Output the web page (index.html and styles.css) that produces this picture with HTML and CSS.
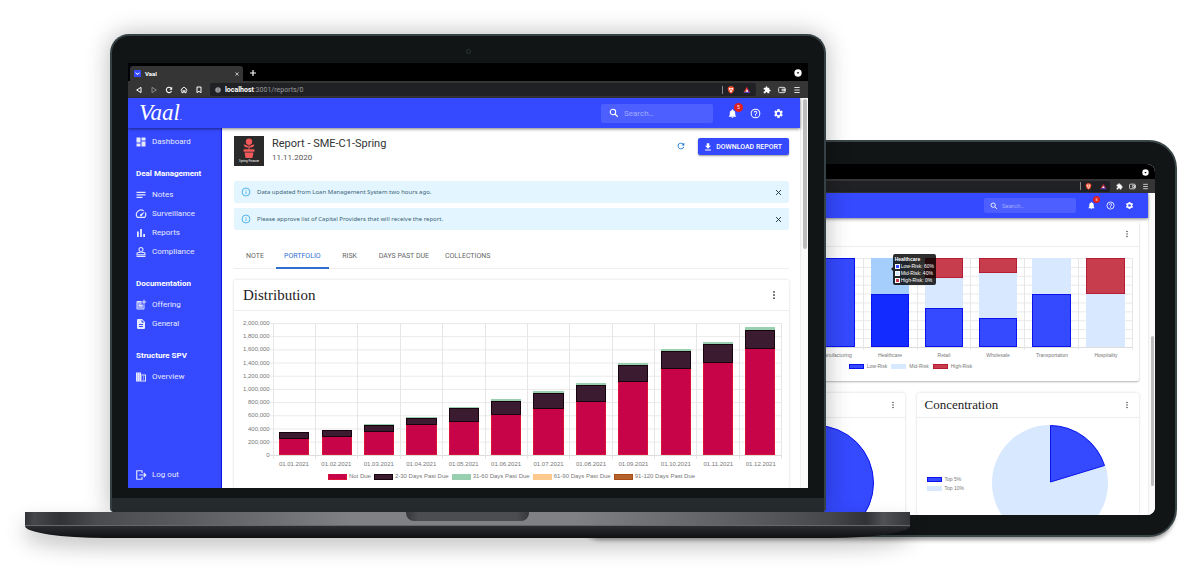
FILE: index.html
```html
<!DOCTYPE html>
<html lang="en">
<head>
<meta charset="utf-8">
<title>Vaal</title>
<link rel="stylesheet" href="styles.css">
</head>
<body>
<svg class="sprite" aria-hidden="true">
  <symbol id="dashboard" viewBox="0 0 24 24"><path d="M3 13h8V3H3zm0 8h8v-6H3zm10 0h8V11h-8zm0-18v6h8V3z"/></symbol>
  <symbol id="notes" viewBox="0 0 24 24"><path d="M3 18h12v-2.4H3zM3 5.600v2.400h18V5.600zm0 7.400h18v-2.400H3z"/></symbol>
  <symbol id="speed" viewBox="0 0 24 24"><path d="M17.500 5.700A9.300 9.300 0 0 0 4.600 18.700h14.800A9.300 9.300 0 0 0 20.700 9" fill="none" stroke="currentColor" stroke-width="2.300"/><path d="M10.400 16a2 2 0 0 0 3 0L19.500 7 10.400 13.200a2 2 0 0 0 0 2.800z"/></symbol>
  <symbol id="bars" viewBox="0 0 24 24"><path d="M4 9h3.600v11H4zM10.200 4h3.600v16h-3.600zM16.400 14H20v6h-3.600z"/></symbol>
  <symbol id="stamp" viewBox="0 0 24 24"><path d="M3 19.500h18V22H3z"/><path d="M12 3a4 4 0 0 0-2 7.500c.8.6.8 1.500.3 2.500H6a2 2 0 0 0-2 2v2.500h16V15a2 2 0 0 0-2-2h-4.300c-.5-1-.5-1.900.3-2.500A4 4 0 0 0 12 3z" fill="none" stroke="currentColor" stroke-width="2.200"/></symbol>
  <symbol id="postadd" viewBox="0 0 24 24"><path d="M17 19H5V7h8V4H5a2 2 0 0 0-2 2v13a2 2 0 0 0 2 2h12a2 2 0 0 0 2-2v-8h-2z"/><path d="M19 1.500h-2V5h-3.500v2H17v3.500h2V7h3.500V5H19zM7 9h6v2H7zm0 3h8.500v2H7zm0 3h8.500v2H7z"/><path d="M4 6h9v3h3v10H4z" opacity=".35"/></symbol>
  <symbol id="doc" viewBox="0 0 24 24"><path d="M14 2H6a2 2 0 0 0-2 2v16a2 2 0 0 0 2 2h12a2 2 0 0 0 2-2V8zm2 16H8v-2h8zm0-4H8v-2h8zm-3-5V3.500L18.500 9z"/></symbol>
  <symbol id="business" viewBox="0 0 24 24"><path d="M12 7V3H2v18h20V7zM6 19H4v-2h2zm0-4H4v-2h2zm0-4H4V9h2zm0-4H4V5h2zm4 12H8v-2h2zm0-4H8v-2h2zm0-4H8V9h2zm0-4H8V5h2zm10 12h-8v-2h2v-2h-2v-2h2v-2h-2V9h8zm-2-8h-2v2h2zm0 4h-2v2h2z"/><path d="M3 4h8v16H3z" opacity=".5"/></symbol>
  <symbol id="logout" viewBox="0 0 24 24"><path d="M14 8V3.500H3.500v17H14V16M8.500 12H21M17.500 8l4 4-4 4" fill="none" stroke="currentColor" stroke-width="2.300"/></symbol>
  <symbol id="bell" viewBox="0 0 24 24"><path d="M12 22a2 2 0 0 0 2-2h-4a2 2 0 0 0 2 2zm6-6v-5c0-3.070-1.640-5.640-4.500-6.320V4a1.500 1.500 0 0 0-3 0v.68C7.630 5.360 6 7.920 6 11v5l-2 2v1h16v-1z"/></symbol>
  <symbol id="help" viewBox="0 0 24 24"><circle cx="12" cy="12" r="9.500" fill="none" stroke="currentColor" stroke-width="2.200"/><path d="M11 16h2v2h-2zm1-10a4 4 0 0 0-4 4h2a2 2 0 1 1 4 0c0 2-3 1.750-3 5h2c0-2.250 3-2.500 3-5a4 4 0 0 0-4-4z"/></symbol>
  <symbol id="gear" viewBox="0 0 24 24"><path d="M19.140 12.940a7 7 0 0 0 0-1.880l2.030-1.580a.5.5 0 0 0 .12-.61l-1.920-3.320a.5.5 0 0 0-.59-.22l-2.390.96a7 7 0 0 0-1.620-.94l-.36-2.540a.5.5 0 0 0-.48-.41h-3.840a.5.5 0 0 0-.47.41l-.36 2.540a7 7 0 0 0-1.620.94l-2.390-.96a.5.5 0 0 0-.59.22L2.740 8.870a.5.5 0 0 0 .12.61l2.030 1.580a7 7 0 0 0 0 1.880l-2.030 1.580a.5.5 0 0 0-.12.61l1.920 3.320c.12.22.37.29.59.22l2.390-.96c.5.38 1.030.7 1.620.94l.36 2.540c.05.24.24.41.48.41h3.840c.24 0 .44-.17.47-.41l.36-2.540a7 7 0 0 0 1.620-.94l2.390.96c.22.08.47 0 .59-.22l1.920-3.320a.5.5 0 0 0-.12-.61zM12 15.600a3.600 3.600 0 1 1 0-7.200 3.600 3.600 0 0 1 0 7.200z"/></symbol>
  <symbol id="search" viewBox="0 0 24 24"><path d="M15 15l6 6M16 9.500a6.500 6.500 0 1 1-13 0 6.500 6.500 0 0 1 13 0z" fill="none" stroke="currentColor" stroke-width="2.600"/></symbol>
  <symbol id="refresh" viewBox="0 0 24 24"><path d="M17.650 6.350A8 8 0 1 0 19.730 14h-2.080A6 6 0 1 1 12 6c1.660 0 3.140.69 4.220 1.780L13 11h7V4z"/></symbol>
  <symbol id="download" viewBox="0 0 24 24"><path d="M19 9h-4V3H9v6H5l7 7zM5 18v2.500h14V18z"/></symbol>
  <symbol id="info" viewBox="0 0 24 24"><circle cx="12" cy="12" r="9.500" fill="none" stroke="currentColor" stroke-width="2"/><path d="M11 7h2v2h-2zm0 4h2v6h-2z"/></symbol>
  <symbol id="close" viewBox="0 0 24 24"><path d="M5.500 5.500l13 13M18.500 5.500l-13 13" stroke="currentColor" stroke-width="2.600"/></symbol>
  <symbol id="plus" viewBox="0 0 24 24"><path d="M12 3v18M3 12h18" stroke="currentColor" stroke-width="3.500"/></symbol>
  <symbol id="more" viewBox="0 0 24 24"><circle cx="12" cy="4.500" r="2.200"/><circle cx="12" cy="12" r="2.200"/><circle cx="12" cy="19.500" r="2.200"/></symbol>
  <symbol id="back" viewBox="0 0 24 24"><path d="M18 4v16L5 12z" fill="none" stroke="currentColor" stroke-width="3" stroke-linejoin="round"/></symbol>
  <symbol id="forward" viewBox="0 0 24 24"><path d="M6 4v16l13-8z" fill="none" stroke="currentColor" stroke-width="2.400" stroke-linejoin="round"/></symbol>
  <symbol id="reload" viewBox="0 0 24 24"><path d="M19.500 14.500A8 8 0 1 1 18 6.500" fill="none" stroke="currentColor" stroke-width="3.200"/><path d="M21.500 2.500v8.500H13z"/></symbol>
  <symbol id="home" viewBox="0 0 24 24"><path d="M2 12L12 3l10 9M5.500 10v10h4.500v-6h4v6h4.500V10" fill="none" stroke="currentColor" stroke-width="2.800"/></symbol>
  <symbol id="bookmark" viewBox="0 0 24 24"><path d="M6 3h12v17l-6-4-6 4z" fill="none" stroke="currentColor" stroke-width="3"/></symbol>
  <symbol id="site" viewBox="0 0 24 24"><circle cx="12" cy="12" r="11" fill="#9a9b9f"/><path d="M10.500 5h3v3h-3zm0 5h3v9h-3z" fill="#55565a"/></symbol>
  <symbol id="lion" viewBox="0 0 24 24"><path d="M7 1h10l2 3h2l1 4-3 10-7 5-7-5L2 8l1-4h2z" fill="#f1502f"/><path d="M6 6h12l-1 5-3 3 1 3-3 2-3-2 1-3-3-3z" fill="#fff"/><path d="M9 8h6l-3 8z" fill="#f1502f"/></symbol>
  <symbol id="prism" viewBox="0 0 24 24"><path d="M12 2L1 21l11-7z" fill="#ff4724"/><path d="M12 2l11 19-11-7z" fill="#9e1f63"/><path d="M1 21h22l-11-7z" fill="#5a3fc0"/><path d="M12 10l4 7H8z" fill="#fff"/></symbol>
  <symbol id="puzzle" viewBox="0 0 24 24"><path d="M20.500 11H19V7a2 2 0 0 0-2-2h-4V3.500a2.500 2.500 0 0 0-5 0V5H4a2 2 0 0 0-2 2v3.800h1.500a2.700 2.700 0 0 1 0 5.400H2V20c0 1.100.9 2 2 2h3.800v-1.500a2.700 2.700 0 0 1 5.400 0V22H17a2 2 0 0 0 2-2v-4h1.500a2.500 2.500 0 0 0 0-5z"/></symbol>
  <symbol id="wallet" viewBox="0 0 24 24"><rect x="2" y="4" width="19" height="16" rx="3" fill="none" stroke="currentColor" stroke-width="3"/><path d="M11 8h12v8H11z"/><circle cx="15" cy="12" r="1.800" fill="#333"/></symbol>
  <symbol id="menu" viewBox="0 0 24 24"><path d="M4 4.500h16M4 12h16M4 19.500h16" stroke="currentColor" stroke-width="3"/></symbol>
  <symbol id="record" viewBox="0 0 24 24"><circle cx="12" cy="12" r="11"/><path d="M8 10l4 5 4-5z" fill="#000"/></symbol>
</svg>

<main class="scene">
  <section class="tablet" aria-label="Tablet">
    <div class="screen">
      <div class="tabstrip"><svg class="ico end"><use href="#record"/></svg></div>
      <div class="toolbar">
        <div class="address">
          <span class="bar-sep"></span>
          <svg class="ico"><use href="#lion"/></svg>
          <svg class="ico"><use href="#prism"/></svg>
        </div>
        <svg class="ico"><use href="#puzzle"/></svg>
        <svg class="ico dim"><use href="#wallet"/></svg>
        <svg class="ico dim"><use href="#menu"/></svg>
      </div>
      <div class="viewport">
        <div class="page">
          <header class="appbar">
            <label class="search"><svg class="ico"><use href="#search"/></svg><input type="search" placeholder="Search…" aria-label="Search"></label>
            <button class="icon-btn" aria-label="Notifications"><svg class="ico"><use href="#bell"/></svg><span class="badge">5</span></button>
            <button class="icon-btn" aria-label="Help"><svg class="ico"><use href="#help"/></svg></button>
            <button class="icon-btn" aria-label="Settings"><svg class="ico"><use href="#gear"/></svg></button>
          </header>
          <div class="app">
            <div class="sidebar"></div>
            <div class="content">
              <section class="card sectors">
                <div class="card-head"><button class="more" aria-label="More options"><svg class="ico"><use href="#more"/></svg></button></div>
                <div class="plot">
                  <div class="col"></div>
                  <div class="col"></div>
                  <div class="col"><i class="seg low" style="height:100%"></i></div>
                  <div class="col hover"><i class="seg low" style="height:60%"></i><i class="seg mid" style="height:40%"></i>
                    <div class="tooltip"><b>Healthcare</b><span><i class="low"></i>Low-Risk: 60%</span><span><i class="mid"></i>Mid-Risk: 40%</span><span><i class="high"></i>High-Risk: 0%</span></div>
                  </div>
                  <div class="col"><i class="seg low" style="height:44%"></i><i class="seg mid" style="height:34%"></i><i class="seg high" style="height:22%"></i></div>
                  <div class="col"><i class="seg low" style="height:33%"></i><i class="seg mid" style="height:50%"></i><i class="seg high" style="height:17%"></i></div>
                  <div class="col"><i class="seg low" style="height:60%"></i><i class="seg mid" style="height:40%"></i></div>
                  <div class="col"><i class="seg mid" style="height:60%"></i><i class="seg high" style="height:40%"></i></div>
                </div>
                <div class="xaxis"><span></span><span></span><span>Manufacturing</span><span>Healthcare</span><span>Retail</span><span>Wholesale</span><span>Transportation</span><span>Hospitality</span></div>
                <div class="legend"><span><i class="low"></i>Low-Risk</span><span><i class="mid"></i>Mid-Risk</span><span><i class="high"></i>High-Risk</span></div>
              </section>
              <div class="pair">
                <section class="card">
                  <div class="card-head"><button class="more" aria-label="More options"><svg class="ico"><use href="#more"/></svg></button></div>
                  <div class="pie-area"><svg class="pie" viewBox="0 0 116 116"><circle cx="58" cy="58" r="57.500" fill="#3549ff" stroke="#0a12ee"/></svg></div>
                </section>
                <section class="card">
                  <div class="card-head"><h2>Concentration</h2><button class="more" aria-label="More options"><svg class="ico"><use href="#more"/></svg></button></div>
                  <div class="pie-area">
                    <div class="legend side"><span><i class="low"></i>Top 5%</span><span><i class="mid"></i>Top 10%</span></div>
                    <svg class="pie" viewBox="0 0 116 116"><circle cx="58" cy="58" r="58" fill="#d8e8fe"/><path d="M58.500 57V.5A57.500 57.500 0 0 1 112.500 40.500z" fill="#3549ff" stroke="#0a12ee"/></svg>
                  </div>
                </section>
              </div>
            </div>
          </div>
        </div>
        <div class="scroll low-thumb"><i></i></div>
      </div>
    </div>
  </section>

  <section class="lid" aria-label="Laptop">
    <div class="bezel"><i class="camera"></i></div>
    <div class="screen">
      <div class="tabstrip">
        <div class="tab"><svg class="favicon" viewBox="0 0 8 8"><path d="M0 0h8v8H0z" fill="#3549ff"/><path d="M1.500 2.500L4 4.200l2.500-1.700v1L4 5.700 1.500 3.500z" fill="#fff"/></svg><b>Vaal</b><svg class="ico"><use href="#close"/></svg></div>
        <svg class="ico"><use href="#plus"/></svg>
        <svg class="ico end"><use href="#record"/></svg>
      </div>
      <div class="toolbar">
        <svg class="ico"><use href="#back"/></svg>
        <svg class="ico off"><use href="#forward"/></svg>
        <svg class="ico"><use href="#reload"/></svg>
        <svg class="ico"><use href="#home"/></svg>
        <svg class="ico"><use href="#bookmark"/></svg>
        <div class="address">
          <svg class="ico small"><use href="#site"/></svg>
          <span class="url"><b>localhost</b>:3001/reports/0</span>
          <span class="bar-sep"></span>
          <svg class="ico"><use href="#lion"/></svg>
          <svg class="ico"><use href="#prism"/></svg>
        </div>
        <svg class="ico"><use href="#puzzle"/></svg>
        <svg class="ico dim"><use href="#wallet"/></svg>
        <svg class="ico dim"><use href="#menu"/></svg>
      </div>
      <div class="viewport">
        <div class="page">
          <header class="appbar">
            <span class="logo">Vaal<small>.</small></span>
            <label class="search"><svg class="ico"><use href="#search"/></svg><input type="search" placeholder="Search…" aria-label="Search"></label>
            <button class="icon-btn" aria-label="Notifications"><svg class="ico"><use href="#bell"/></svg><span class="badge">5</span></button>
            <button class="icon-btn" aria-label="Help"><svg class="ico"><use href="#help"/></svg></button>
            <button class="icon-btn" aria-label="Settings"><svg class="ico"><use href="#gear"/></svg></button>
          </header>
          <div class="app">
            <nav class="sidebar">
              <a href="#"><svg class="ico"><use href="#dashboard"/></svg>Dashboard</a>
              <h3>Deal Management</h3>
              <a href="#"><svg class="ico"><use href="#notes"/></svg>Notes</a>
              <a href="#"><svg class="ico"><use href="#speed"/></svg>Surveillance</a>
              <a href="#"><svg class="ico"><use href="#bars"/></svg>Reports</a>
              <a href="#"><svg class="ico"><use href="#stamp"/></svg>Compliance</a>
              <h3>Documentation</h3>
              <a href="#"><svg class="ico"><use href="#postadd"/></svg>Offering</a>
              <a href="#"><svg class="ico"><use href="#doc"/></svg>General</a>
              <h3>Structure SPV</h3>
              <a href="#"><svg class="ico"><use href="#business"/></svg>Overview</a>
              <a href="#" class="logout"><svg class="ico"><use href="#logout"/></svg>Log out</a>
            </nav>
            <div class="content">
              <div class="report">
                <div class="thumb">
                  <svg viewBox="0 0 20 22"><g fill="#f2595b"><circle cx="10" cy="4" r="3.500"/><path d="M9.400 7h1.200v6H9.400zM4 7c3 0 5 1 5.500 3.500C6.500 10.500 4.500 9.500 4 7zM16 7c-3 0-5 1-5.500 3.500 3 0 5-1 5.500-3.500zM4 12.500h12v2.800H4zM5 16h10l-1.200 6H6.200z"/></g></svg>
                  <span>Spring Finance</span>
                </div>
                <div class="report-title"><h1>Report - SME-C1-Spring</h1><time>11.11.2020</time></div>
                <button class="refresh" aria-label="Refresh"><svg class="ico"><use href="#refresh"/></svg></button>
                <button class="download"><svg class="ico"><use href="#download"/></svg>DOWNLOAD REPORT</button>
              </div>
              <div class="alert"><svg class="ico"><use href="#info"/></svg><p>Data updated from Loan Management System two hours ago.</p><button aria-label="Dismiss"><svg class="ico"><use href="#close"/></svg></button></div>
              <div class="alert"><svg class="ico"><use href="#info"/></svg><p>Please approve list of Capital Providers that will receive the report.</p><button aria-label="Dismiss"><svg class="ico"><use href="#close"/></svg></button></div>
              <div class="tabs" role="tablist">
                <button role="tab">NOTE</button><button role="tab" class="active" aria-selected="true">PORTFOLIO</button><button role="tab">RISK</button><button role="tab">DAYS PAST DUE</button><button role="tab">COLLECTIONS</button>
              </div>
              <section class="card distribution">
                <div class="card-head"><h2>Distribution</h2><button class="more" aria-label="More options"><svg class="ico"><use href="#more"/></svg></button></div>
                <div class="chart">
                  <div class="yaxis"><span>2,000,000</span><span>1,800,000</span><span>1,600,000</span><span>1,400,000</span><span>1,200,000</span><span>1,000,000</span><span>800,000</span><span>600,000</span><span>400,000</span><span>200,000</span><span>0</span></div>
                  <div class="chart-main">
                    <div class="plot">
                      <div class="col"><i class="seg due" style="height:12.5%"></i><i class="seg d30" style="height:4.8%"></i><i class="seg d60" style="height:0.5%"></i></div>
                      <div class="col"><i class="seg due" style="height:14%"></i><i class="seg d30" style="height:4.8%"></i><i class="seg d60" style="height:0.5%"></i></div>
                      <div class="col"><i class="seg due" style="height:17.5%"></i><i class="seg d30" style="height:5.1%"></i><i class="seg d60" style="height:0.6%"></i></div>
                      <div class="col"><i class="seg due" style="height:22.5%"></i><i class="seg d30" style="height:5.3%"></i><i class="seg d60" style="height:0.7%"></i></div>
                      <div class="col"><i class="seg due" style="height:25%"></i><i class="seg d30" style="height:10.4%"></i><i class="seg d60" style="height:1.1%"></i></div>
                      <div class="col"><i class="seg due" style="height:30%"></i><i class="seg d30" style="height:10.9%"></i><i class="seg d60" style="height:1.2%"></i></div>
                      <div class="col"><i class="seg due" style="height:35%"></i><i class="seg d30" style="height:12%"></i><i class="seg d60" style="height:1.3%"></i></div>
                      <div class="col"><i class="seg due" style="height:40%"></i><i class="seg d30" style="height:13%"></i><i class="seg d60" style="height:1.4%"></i></div>
                      <div class="col"><i class="seg due" style="height:55%"></i><i class="seg d30" style="height:13.2%"></i><i class="seg d60" style="height:1.5%"></i></div>
                      <div class="col"><i class="seg due" style="height:65%"></i><i class="seg d30" style="height:13.6%"></i><i class="seg d60" style="height:1.5%"></i></div>
                      <div class="col"><i class="seg due" style="height:70%"></i><i class="seg d30" style="height:14.2%"></i><i class="seg d60" style="height:1.8%"></i></div>
                      <div class="col"><i class="seg due" style="height:80%"></i><i class="seg d30" style="height:14.7%"></i><i class="seg d60" style="height:2%"></i></div>
                    </div>
                    <div class="xaxis"><span>01.01.2021</span><span>01.02.2021</span><span>01.03.2021</span><span>01.04.2021</span><span>01.05.2021</span><span>01.06.2021</span><span>01.07.2021</span><span>01.08.2021</span><span>01.09.2021</span><span>01.10.2021</span><span>01.11.2021</span><span>01.12.2021</span></div>
                  </div>
                </div>
                <div class="legend"><span><i class="due"></i>Not Due</span><span><i class="d30"></i>2-30 Days Past Due</span><span><i class="d60"></i>31-60 Days Past Due</span><span><i class="d90"></i>61-90 Days Past Due</span><span><i class="d120"></i>91-120 Days Past Due</span></div>
              </section>
            </div>
          </div>
        </div>
        <div class="scroll"><i></i></div>
      </div>
    </div>
    <div class="chin"></div>
  </section>
  <div class="base"><div class="deck"><i class="notch"></i></div><div class="underside"></div></div>
</main>
</body>
</html>
```

FILE: styles.css
```css
* { box-sizing: border-box; }

body {
  margin: 0;
  background: #fff;
  font-family: Roboto, "Liberation Sans", sans-serif;
  color: #333;
}

h1, h2, h3, p { margin: 0; font-weight: 400; }
button, input {
  font: inherit;
  color: inherit;
  background: none;
  border: 0;
  padding: 0;
  margin: 0;
  min-width: 0;
}
button { display: flex; align-items: center; cursor: pointer; }
a { color: inherit; text-decoration: none; }

.sprite { display: none; }
.ico { display: block; flex: none; width: 10px; height: 10px; fill: currentColor; }

/* Scene: both devices share one proportional grid */
.scene {
  display: grid;
  grid-template-columns: 25fr 85fr 463fr 253fr 84fr 267fr 23fr;
  padding: 34px 0 45px;
  overflow: hidden;
}
.lid, .base, .tablet { min-width: 0; }

.lid {
  grid-area: 1 / 3 / 2 / 5;
  position: relative;
  z-index: 1;
  border: 2px solid #354144;
  border-bottom: 0;
  border-radius: 19px 19px 4px 4px;
  background: #111515;
  box-shadow: 0 0 24px rgba(0, 0, 0, .28);
}
.bezel { height: 27px; padding-top: 3px; display: grid; place-items: center; }
.camera { width: 5px; height: 5px; border: 1px solid #2e3536; border-radius: 50%; }
.lid .screen { margin: 0 16px 10px; }
.chin { height: 14px; background: #262c2e; border-radius: 0 0 4px 4px; }

.base {
  grid-area: 2 / 2 / 3 / 6;
  position: relative;
  z-index: 2;
  filter: drop-shadow(0 10px 10px rgba(0, 0, 0, .22));
}
.deck {
  height: 14px;
  border-bottom: 1px solid #66676a;
  background: linear-gradient(90deg, #303236 0, #45474b 1%, #303236 4%, #4a4b4f 8%, #5a5b5f 18%, #808184 37%, #808184 62%, #5a5b5f 82%, #46474b 91%, #303236 95%, #505155 97%, #35363a 100%);
}
.notch {
  display: block;
  width: 14%;
  height: 9px;
  margin: 0 auto;
  border-radius: 0 0 8px 8px;
  background: linear-gradient(90deg, #36373b, #4c4d51 10%, #4c4d51 90%, #36373b);
}
.underside {
  height: 12px;
  border-radius: 0 0 80px 80px / 0 0 12px 12px;
  background: linear-gradient(#2c2d32, #0e0f11);
}

.tablet {
  grid-area: 1 / 4 / 3 / 7;
  align-self: end;
  margin-bottom: 1px;
  padding: 22px 20px 20px;
  border: 2px solid #3a4548;
  border-radius: 28px;
  background: #111515;
  box-shadow: 0 6px 4px -3px rgba(0, 0, 0, .4);
}
.tablet .screen { border-radius: 8px; }

/* Browser chrome */
.screen { overflow: hidden; background: #fff; }
.tabstrip {
  display: flex;
  align-items: center;
  height: 18px;
  padding: 2px 6px 0 2px;
  background: #000;
  color: #fff;
}
.tabstrip .ico { width: 8px; height: 8px; }
.tabstrip .end { margin-left: auto; }
.tab {
  display: flex;
  align-items: center;
  gap: 4px;
  align-self: end;
  width: 113px;
  height: 15px;
  margin-right: 6px;
  padding: 0 3px 0 4px;
  border-radius: 3px 3px 0 0;
  background: #353535;
  font-size: 6px;
}
.tab .ico { width: 6px; height: 6px; margin-left: auto; }
.favicon { width: 7px; height: 7px; }
.toolbar {
  display: flex;
  align-items: center;
  gap: 7px;
  height: 17px;
  padding: 0 7px;
  background: #353535;
  color: #fff;
}
.toolbar .ico { width: 8px; height: 8px; }
.toolbar .ico.small { width: 6px; height: 6px; }
.toolbar .dim { color: #ddd; }
.toolbar .off { color: #999; }
.address {
  flex: 1;
  display: flex;
  align-items: center;
  gap: 4px;
  height: 13px;
  padding: 0 5px;
  border-radius: 2px;
  background: #202124;
  font-size: 7px;
  color: #9a9b9f;
}
.address b { color: #fff; }
.address .ico + .ico { margin-left: 4px; }
.bar-sep { width: 1px; height: 8px; margin-left: auto; background: #888; }

/* Application */
.viewport { display: flex; }
.page { flex: 1; min-width: 0; }
.scroll { width: 8px; padding: 1px 1px 0 2px; background: #fafafa; border-left: 1px solid #eee; }
.scroll i { display: block; height: 150px; border-radius: 3px; background: #bdbdbd; }
.appbar {
  position: relative;
  display: flex;
  align-items: center;
  justify-content: flex-end;
  height: 30px;
  padding-right: 16px;
  background: #3549ff;
  color: #fff;
  box-shadow: 0 1px 3px rgba(0, 0, 0, .5);
}
.logo {
  margin: 3px auto 0 11px;
  font: italic 23px/24px "Liberation Serif", serif;
}
.logo small { font-size: 9px; }
.search {
  display: flex;
  align-items: center;
  gap: 5px;
  width: 112px;
  height: 19px;
  margin-right: 1px;
  padding: 0 8px;
  border-radius: 2px;
  background: #4d5fff;
}
.search input { width: 100%; font-size: 8px; outline: 0; }
.search input::placeholder { color: #a3acff; opacity: 1; }
.icon-btn { position: relative; margin-left: 12px; }
.search + .icon-btn { margin-left: 13px; }
.icon-btn .ico { width: 11px; height: 11px; }
.badge {
  position: absolute;
  top: -5px;
  right: -5px;
  width: 9px;
  border-radius: 50%;
  background: #e02020;
  font-size: 5px;
  line-height: 9px;
  text-align: center;
}
.app { display: flex; }
.sidebar {
  display: flex;
  flex-direction: column;
  width: 94px;
  padding: 4px 7px;
  background: #3549ff;
  border-right: 1px solid #0a12ee;
  color: #fff;
  font-size: 8px;
  line-height: 19px;
}
.sidebar a { display: flex; align-items: center; gap: 5px; color: #e6e9ff; }
.sidebar .ico { width: 12px; height: 12px; }
.sidebar h3 { margin: 13px 0 2px 1px; font-size: 8px; line-height: 19px; font-weight: 700; white-space: nowrap; }
.sidebar .logout { margin-top: auto; }
.content { flex: 1; min-width: 0; padding: 8px 11px 0 12px; }

.report { display: flex; align-items: flex-start; margin-bottom: 15px; }
.thumb {
  display: flex;
  flex-direction: column;
  align-items: center;
  width: 30px;
  height: 30px;
  padding-top: 2px;
  background: #2a2a2a;
  color: #fff;
  font-size: 3px;
  line-height: 6px;
  white-space: nowrap;
}
.thumb svg { width: 18px; height: 20px; }
.report-title { flex: 1; margin-left: 8px; }
.report h1 { font-size: 11px; line-height: 15px; }
.report time { display: block; font-size: 8px; line-height: 13px; color: #555; }
.refresh { height: 19px; margin-right: 12px; color: #1976d2; }
.download {
  gap: 3px;
  height: 17px;
  margin-top: 2px;
  padding: 0 7px 0 5px;
  border-radius: 2px;
  background: #3549ff;
  box-shadow: 0 1px 2px rgba(0, 0, 0, .4);
  color: #fff;
  font-size: 7px;
  font-weight: 500;
}

.alert {
  display: flex;
  align-items: center;
  gap: 6px;
  height: 22px;
  margin-bottom: 5px;
  padding: 0 6px 0 7px;
  border-radius: 2px;
  background: #e3f5fe;
  color: #3b6478;
  font: 6px/8px "Noto Sans", sans-serif;
}
.alert .ico { color: #35a8f0; }
.alert button { margin-left: auto; }
.alert button .ico { width: 9px; height: 9px; color: #1b3947; }

.tabs { display: flex; margin: 15px 0 11px; border-bottom: 1px solid #eee; }
.tabs button {
  justify-content: center;
  min-width: 42px;
  height: 24px;
  padding: 0 8px;
  font-size: 7px;
  color: #666;
  border-bottom: 2px solid transparent;
  margin-bottom: -1px;
}
.tabs button.active { color: #2f6fd0; border-color: #2f6fd0; }

.card { border-radius: 2px; box-shadow: 0 0 3px rgba(0, 0, 0, .16); }
.card-head {
  display: flex;
  align-items: center;
  height: 31px;
  padding: 0 10px 0 9px;
  border-bottom: 1px solid #eee;
}
.card h2 { font: 15px/20px "Liberation Serif", serif; color: #222; }
.more { margin-left: auto; color: #444; }
.distribution { padding-bottom: 8px; }

/* Charts */
.chart { display: flex; padding: 12px 7px 0 9px; }
.yaxis {
  display: flex;
  flex-direction: column;
  justify-content: space-between;
  height: 139px;
  margin-top: -3px;
  text-align: right;
}
.yaxis, .xaxis, .legend { font: 6px/7px "Liberation Sans", sans-serif; color: #777; }
.chart-main { flex: 1; min-width: 0; }
.plot {
  display: flex;
  height: 133px;
  padding-left: 3px;
  border-bottom: 1px solid #ddd;
  background: linear-gradient(#e9e9e9 1px, transparent 1px) 0 0 / 100% 10%;
}
.col {
  position: relative;
  flex: 1;
  display: flex;
  flex-direction: column-reverse;
  align-items: center;
  height: 136px;
  padding-bottom: 4px;
  border-left: 1px solid #e6e6e6;
}
.col:last-child { border-right: 1px solid #e6e6e6; }
.seg { width: 73%; flex: none; }
.xaxis { display: flex; padding: 5px 0 0 3px; }
.xaxis span { flex: 1; min-width: 0; display: flex; justify-content: center; white-space: nowrap; }
.legend { display: flex; justify-content: center; gap: 3px; margin-top: 5px; white-space: nowrap; }
.legend span { display: flex; align-items: center; gap: 2px; }
.legend i { width: 19px; height: 6px; }

.due { background: #c80449; border: 1px solid #dc1238; border-top: 0; }
.d30 { background: #3b1b2f; border: 1px solid #19030f; }
.d60 { background: #98cfae; }
.d90 { background: #ffc98e; }
.d120 { background: #b5632d; border: 1px solid #a84d16; }
.low { background: #3549ff; border: 1px solid #0a12ee; }
.mid { background: #d8e8fe; }
.high { background: #c73d4d; border: 1px solid #b51d34; }
.hover .seg.low { background: #142bff; }
.hover .seg.mid { background: #a6cefc; }

/* Tablet: the same application at a smaller scale */
.tablet .tabstrip { height: 15px; }
.tablet .tabstrip .ico, .tablet .toolbar .ico { width: 7px; height: 7px; }
.tablet .toolbar { height: 14px; gap: 6px; padding: 0 6px; }
.tablet .address { height: 11px; padding: 0 3px; }
.tablet .scroll { width: 7px; }
.tablet .scroll.low-thumb { padding-top: 143px; }
.tablet .appbar { height: 25px; padding-right: 14px; }
.tablet .search { width: 92px; height: 15px; padding: 0 6px; gap: 4px; }
.tablet .search .ico { width: 8px; height: 8px; }
.tablet .search input { font-size: 6px; }
.tablet .icon-btn { margin-left: 10px; }
.tablet .icon-btn .ico { width: 9px; height: 9px; }
.tablet .badge { top: -5px; width: 7px; right: -4px; line-height: 7px; font-size: 4px; }
.tablet .sidebar { width: 77px; }
.tablet .content { padding: 4px 9px 0 10px; }
.tablet .card-head { height: 25px; padding: 0 8px; }
.tablet .more .ico { width: 8px; height: 8px; }
.tablet .card h2 { font-size: 13px; line-height: 18px; }
.tablet .sectors { padding-bottom: 12px; box-shadow: 0 1px 2px rgba(0, 0, 0, .3); }
.tablet .plot { height: 90px; margin: 11px 6px 0 16px; }
.tablet .col { height: 92px; padding-bottom: 3px; }
.tablet .xaxis { margin: 0 6px 0 16px; padding-top: 4px; }
.tablet .xaxis, .tablet .legend { font-size: 5px; line-height: 6px; }
.tablet .legend { gap: 4px; }
.tablet .legend span { gap: 3px; }
.tablet .legend i { width: 15px; height: 5px; }
.pair { display: grid; grid-template-columns: 1fr 1fr; gap: 12px; margin-top: 12px; }
.pie-area {
  display: flex;
  justify-content: flex-end;
  align-items: flex-start;
  height: 97px;
  padding: 7px 31px 0 10px;
  overflow: hidden;
}
.pie { display: block; flex: none; width: 116px; height: 116px; }
.tablet .legend.side { flex-direction: column; gap: 3px; margin: 51px auto 0 0; }
.tooltip {
  position: absolute;
  top: -4px;
  left: 29px;
  z-index: 1;
  display: grid;
  gap: 1px;
  padding: 2px;
  border-radius: 2px;
  background: rgba(0, 0, 0, .82);
  color: #fff;
  font: 5px/6px "Liberation Sans", sans-serif;
  white-space: nowrap;
}
.tooltip::before {
  content: "";
  position: absolute;
  top: 13px;
  left: -2px;
  border: 2px solid transparent;
  border-right-color: #222;
  border-left: 0;
}
.tooltip span { display: flex; align-items: center; gap: 1px; }
.tooltip i { width: 5px; height: 5px; border: 1px solid #fff; }
```
